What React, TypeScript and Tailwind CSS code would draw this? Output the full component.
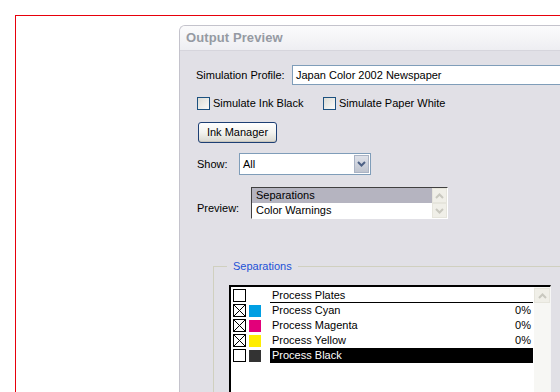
import React from "react";

const font = { fontFamily: '"Liberation Sans", Arial, sans-serif' };

const XpCheck = ({ label }: { label: string }) => (
   <div className="flex items-center h-[13px]">
      <div className="w-[13px] h-[13px] border border-[#1c5180] bg-gradient-to-br from-[#dcdcd6] to-[#fbfbf9]" />
      <span className="ml-[3px] text-[11px] text-black leading-none">{label}</span>
   </div>
);

const Chevron = ({ up, color }: { up?: boolean; color: string }) => (
   <svg width="9" height="6" viewBox="0 0 9 6">
      <path
         d={up ? "M1 5 L4.5 1.5 L8 5" : "M1 1 L4.5 4.5 L8 1"}
         fill="none"
         stroke={color}
         strokeWidth="2"
      />
   </svg>
);

const ListCheck = ({ checked }: { checked: boolean }) => (
   <div className="w-[13px] h-[13px] border border-black bg-white">
      {checked && (
         <svg width="11" height="11" viewBox="0 0 11 11">
            <path d="M0 0 L11 11 M11 0 L0 11" stroke="#000" strokeWidth="1" />
         </svg>
      )}
   </div>
);

const plates = [
   { name: "Process Cyan", color: "bg-[#009fe3]", checked: true, pct: "0%" },
   { name: "Process Magenta", color: "bg-[#e2007a]", checked: true, pct: "0%" },
   { name: "Process Yellow", color: "bg-[#ffed00]", checked: true, pct: "0%" },
   { name: "Process Black", color: "bg-[#333333]", checked: false, pct: "", selected: true },
];

const App: React.FC = () => {
   return (
      <div className="w-[560px] h-[392px] bg-white overflow-hidden pt-[15px] pl-[15px]" style={font}>
         <div className="h-[400px] border-solid border-t-[1px] border-l-[1px] border-red-600 pl-[163px] pt-[9px]">
            <div className="h-[400px] w-[420px] rounded-tl-[6px] border-t border-l border-[#c4c3cc] bg-[#e1e0e6] overflow-hidden">
               {/* title bar */}
               <div className="h-[25px] flex items-center pl-[6px] bg-gradient-to-b from-[#fbfbfc] to-[#eeeef2] border-b border-[#d6d5dc]">
                  <span className="text-[13px] font-bold text-[#959aa3] tracking-[0.1px]">Output Preview</span>
               </div>

               <div className="flex flex-col pl-[16px] text-[11px] text-black">
                  {/* profile */}
                  <div className="flex items-center mt-[14px] h-[20px]">
                     <span className="w-[96px]">Simulation Profile:</span>
                     <div className="w-[300px] h-[20px] border border-[#7f9db9] bg-white flex items-center pl-[3px]">
                        Japan Color 2002 Newspaper
                     </div>
                  </div>

                  {/* checkboxes */}
                  <div className="flex items-center mt-[12px] ml-[1px]">
                     <div className="w-[126px]">
                        <XpCheck label="Simulate Ink Black" />
                     </div>
                     <XpCheck label="Simulate Paper White" />
                  </div>

                  {/* button */}
                  <div className="mt-[12px] ml-[2px]">
                     <button className="w-[79px] h-[21px] rounded-[3px] border border-[#1d3f74] bg-gradient-to-b from-[#ffffff] via-[#f3f3ef] to-[#d9d8d0] text-[11px] text-black shadow-[inset_0_-1px_0_#c8c6bd]">
                        Ink Manager
                     </button>
                  </div>

                  {/* show */}
                  <div className="flex items-center mt-[10px] h-[22px]">
                     <span className="w-[42px] ml-[1px]">Show:</span>
                     <div className="w-[132px] h-[22px] border border-[#7f9db9] bg-white flex items-center">
                        <span className="flex-1 pl-[3px]">All</span>
                        <div className="w-[15px] h-[18px] mr-[1px] bg-gradient-to-b from-[#dfe2ea] to-[#bfc4cf] border border-[#aab3c4] flex items-center justify-center">
                           <Chevron color="#4d6185" />
                        </div>
                     </div>
                  </div>

                  {/* preview */}
                  <div className="flex items-end mt-[12px]">
                     <span className="w-[54px] ml-[1px] mb-[3px]">Preview:</span>
                     <div className="w-[197px] h-[32px] border-t border-l border-[#404040] border-r border-b border-r-[#ffffff] border-b-[#ffffff] bg-white flex">
                        <div className="flex-1 flex flex-col">
                           <div className="h-[15px] bg-[#b5b4c0] pl-[4px] flex items-center">Separations</div>
                           <div className="h-[15px] pl-[4px] flex items-center">Color Warnings</div>
                        </div>
                        <div className="w-[15px] flex flex-col bg-[#f7f7f4]">
                           <div className="h-[15px] border border-[#e6e5dc] bg-[#f0efe8] flex items-center justify-center">
                              <Chevron up color="#c9c8bf" />
                           </div>
                           <div className="h-[15px] border border-[#e6e5dc] bg-[#f0efe8] flex items-center justify-center">
                              <Chevron color="#c9c8bf" />
                           </div>
                        </div>
                     </div>
                  </div>

                  {/* separations group */}
                  <div className="mt-[47px] ml-[17px] border-t border-l border-[#d0d0bf] h-[200px] relative">
                     <span className="absolute -top-[8px] left-[13px] px-[6px] bg-[#e1e0e6] text-[#2152d6] leading-[14px]">Separations</span>
                     <div className="mt-[18px] ml-[15px] w-[322px] h-[120px] border-t-2 border-l-2 border-t-[#000] border-l-[#000] border-r border-r-[#f6f6f6] bg-white flex">
                        <div className="flex-1 flex flex-col pl-[2px] pt-[1px]">
                           <div className="h-[15px] flex items-center">
                              <ListCheck checked={false} />
                              <div className="w-[12px] ml-[3px]" />
                              <div className="ml-[9px] flex-1 h-[15px] border-b border-black flex items-center pl-[2px] mr-[1px]">Process Plates</div>
                           </div>
                           {plates.map((p) => (
                              <div key={p.name} className="h-[15px] flex items-center">
                                 <ListCheck checked={p.checked} />
                                 <div className={`w-[12px] h-[12px] ml-[3px] ${p.color}`} />
                                 <div className={`ml-[9px] flex-1 h-[15px] flex items-center pl-[2px] pr-[2px] mr-[1px] ${p.selected ? "bg-black text-white" : ""}`}>
                                    <span className="flex-1">{p.name}</span>
                                    <span>{p.pct}</span>
                                 </div>
                              </div>
                           ))}
                        </div>
                        <div className="w-[16px] bg-[#f7f7f4] pt-[1px]">
                           <div className="h-[15px] border border-[#e6e5dc] bg-[#f0efe8] flex items-center justify-center">
                              <Chevron up color="#c9c8bf" />
                           </div>
                        </div>
                     </div>
                  </div>
               </div>
            </div>
         </div>
      </div>
   );
};

export default App;
